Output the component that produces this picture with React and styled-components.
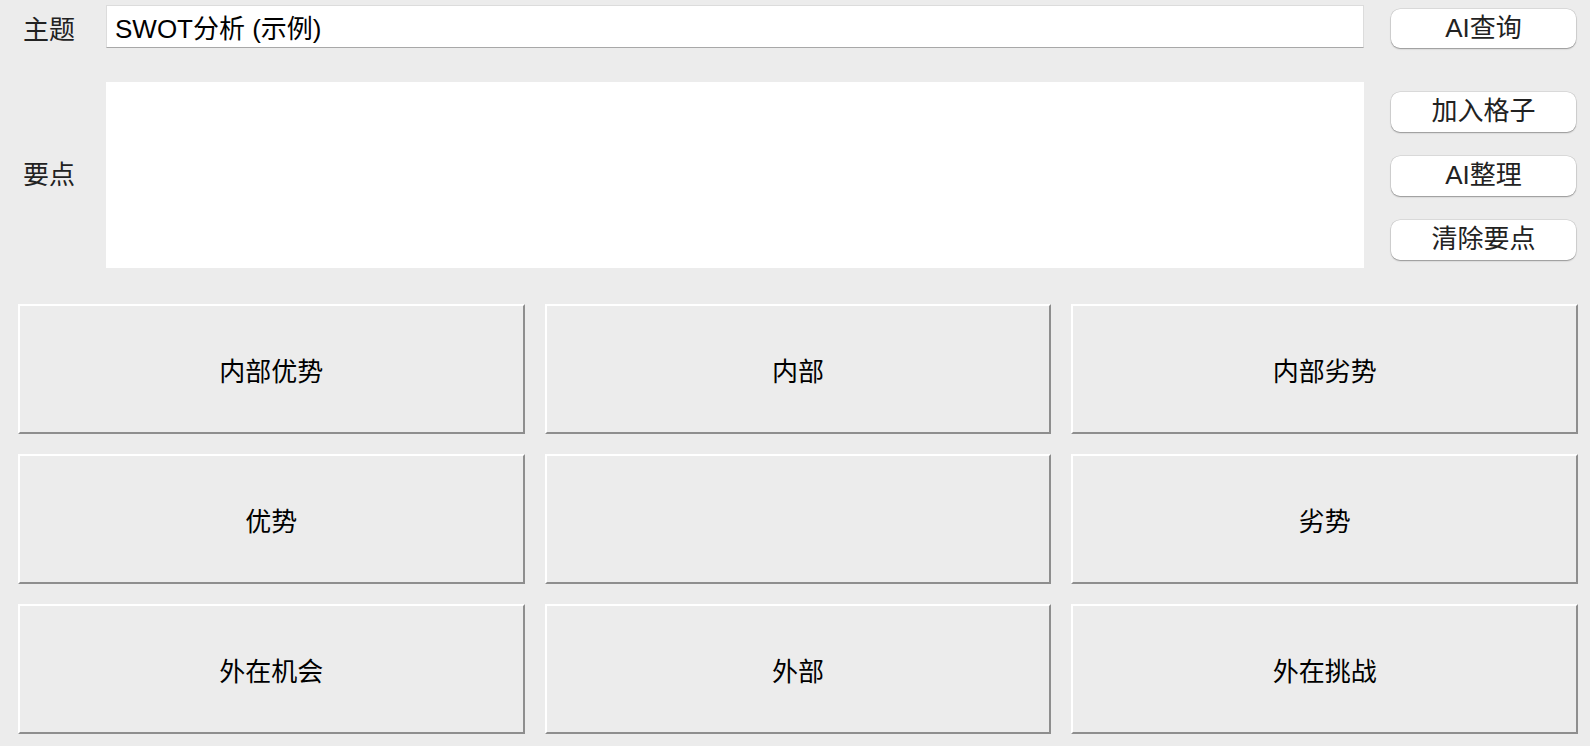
import React from "react";
import styled, { createGlobalStyle } from "styled-components";

const GlobalStyle = createGlobalStyle`
	html, body {
		margin: 0;
		padding: 0;
		background: #ececec;
	}
	body {
		font-family: "Liberation Sans", "Noto Sans CJK SC", sans-serif;
		color: #1a1a1a;
	}
`;

const Page = styled.div`
	width: 1590px;
	height: 746px;
	box-sizing: border-box;
	padding: 5px 12px 12px 0;
	display: flex;
	flex-direction: column;
`;

const Form = styled.div`
	display: grid;
	grid-template-columns: 79px 1258px 185px;
	grid-template-rows: 43px 186px;
	column-gap: 27px;
	row-gap: 34px;
`;

const Label = styled.div`
	font-size: 26px;
	line-height: 1;
	padding-left: 23px;
	display: flex;
	align-items: center;
	transform: translateY(${(p) => p.$shift || 0}px);
	color: #222;
`;

const TextInput = styled.input`
	box-sizing: border-box;
	width: 100%;
	height: 43px;
	margin: 0;
	padding: 0 8px;
	border: 1px solid #dcdcdc;
	border-bottom-color: #a8a8a8;
	background: #fff;
	font-family: "Liberation Sans", "Noto Sans CJK SC", sans-serif;
	font-size: 26px;
	color: #000;
	outline: none;
`;

const TextArea = styled.textarea`
	box-sizing: border-box;
	width: 100%;
	height: 186px;
	margin: 0;
	padding: 6px 8px;
	border: none;
	background: #fff;
	resize: none;
	font-family: "Liberation Sans", "Noto Sans CJK SC", sans-serif;
	font-size: 26px;
	outline: none;
`;

const ButtonStack = styled.div`
	display: flex;
	flex-direction: column;
	gap: 24px;
	padding-top: ${(p) => p.$top}px;
`;

const MacButton = styled.button`
	box-sizing: border-box;
	width: 185px;
	height: 40px;
	margin: 0;
	padding: 0 0 2px;
	border: none;
	border-radius: 9px;
	background: #fff;
	box-shadow: 0 0 0 0.5px rgba(0, 0, 0, 0.14), 0 1px 1.5px rgba(0, 0, 0, 0.32);
	font-family: "Liberation Sans", "Noto Sans CJK SC", sans-serif;
	font-size: 26px;
	line-height: 1;
	color: #222;
	cursor: pointer;
`;

const Board = styled.div`
	margin-top: 36px;
	margin-left: 18px;
	display: grid;
	grid-template-columns: repeat(3, 1fr);
	grid-template-rows: repeat(3, 130px);
	gap: 20px;
`;

const Cell = styled.div`
	box-sizing: border-box;
	border: 2px solid;
	border-color: #ffffff #8e8e8e #8e8e8e #ffffff;
	background: #ececec;
	display: flex;
	align-items: center;
	justify-content: center;
	font-family: "Noto Sans CJK SC", sans-serif;
	font-size: 26px;
	color: #000;
`;

const cells = [
	"内部优势",
	"内部",
	"内部劣势",
	"优势",
	"",
	"劣势",
	"外在机会",
	"外部",
	"外在挑战",
];

export default function App() {
	return (
		<>
			<GlobalStyle />
			<Page>
				<Form>
					<Label $shift={3}>主题</Label>
					<TextInput defaultValue='SWOT分析 (示例)' />
					<ButtonStack $top={4}>
						<MacButton>AI查询</MacButton>
					</ButtonStack>

					<Label>要点</Label>
					<TextArea />
					<ButtonStack $top={10}>
						<MacButton>加入格子</MacButton>
						<MacButton>AI整理</MacButton>
						<MacButton>清除要点</MacButton>
					</ButtonStack>
				</Form>
				<Board>
					{cells.map((text, i) => (
						<Cell key={i}>{text}</Cell>
					))}
				</Board>
			</Page>
		</>
	);
}
